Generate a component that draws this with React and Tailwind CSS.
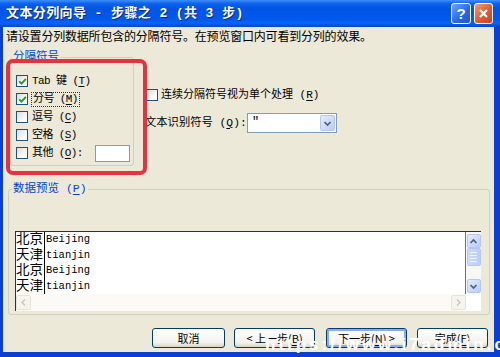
const CHK = (
  <svg width="9" height="9" viewBox="0 0 9 9">
    <path d="M1.2 4.3 L3.5 6.7 L7.9 1.9" stroke="#21A121" strokeWidth="1.9" fill="none" />
  </svg>
);

function Check({ checked }) {
  return (
    <span className="w-[12px] h-[12px] shrink-0 border border-[#1C5180] bg-[linear-gradient(135deg,#DCDCD5,#FFFFFF_80%)] flex items-center justify-center">
      {checked ? CHK : null}
    </span>
  );
}

function U({ children }) {
  return <span className="underline underline-offset-[2px]">{children}</span>;
}

function Arrow({ dir }) {
  const d = dir === "up" ? "M1.5 5 L4.5 2 L7.5 5" : "M1.5 2 L4.5 5 L7.5 2";
  return (
    <div className="w-[14px] h-[14px] rounded-[2px] border border-[#B4C7F3] bg-[linear-gradient(135deg,#E4ECFE,#B9CCF7)] flex items-center justify-center">
      <svg width="9" height="7" viewBox="0 0 9 7">
        <path d={d} stroke="#4D6185" strokeWidth="1.7" fill="none" />
      </svg>
    </div>
  );
}

function HArrow({ dir }) {
  const d = dir === "left" ? "M5 1.5 L2 4.5 L5 7.5" : "M2 1.5 L5 4.5 L2 7.5";
  return (
    <div className="w-[15px] h-[15px] rounded-[2px] border border-[#E6E4DA] bg-[#F5F4EF] flex items-center justify-center">
      <svg width="7" height="9" viewBox="0 0 7 9">
        <path d={d} stroke="#C9C6BA" strokeWidth="1.4" fill="none" />
      </svg>
    </div>
  );
}

const rows = [
  ["北京", "Beijing"],
  ["天津", "tianjin"],
  ["北京", "Beijing"],
  ["天津", "tianjin"],
];

const BTN =
  "h-[20px] rounded-[3px] border border-[#003C74] bg-[linear-gradient(180deg,#FFFFFF,#F3F2EC_75%,#D8D3C8)] flex items-center justify-center whitespace-pre";

export default function App() {
  return (
    <div className="relative w-[500px] h-[357px] overflow-hidden flex flex-col bg-[#0B3FD4] font-['Liberation_Mono','Noto_Sans_CJK_SC',monospace] text-black">
      {/* title bar */}
      <div className="h-[27px] shrink-0 flex items-center pl-[6px] pr-[7px] bg-[linear-gradient(180deg,#3D8EF9_0%,#0B60EB_14%,#0055E5_32%,#0058EE_70%,#0A63F3_86%,#0047C9_100%)]">
        <div className="flex-1 text-white font-bold text-[13px] tracking-[0.4px] whitespace-pre leading-[16px] [text-shadow:1px_1px_0_#0A2A80]">
          文本分列向导 - 步骤之 2 (共 3 步)
        </div>
        <div className="flex items-center gap-[3px]">
          <div className="w-[20px] h-[21px] rounded-[3px] border border-white bg-[linear-gradient(135deg,#6FA2FA,#2866E4_60%,#1F55D0)] flex items-center justify-center text-white font-bold text-[15px] leading-none font-['Liberation_Sans',sans-serif]">
            ?
          </div>
          <div className="w-[19px] h-[21px] rounded-[3px] border border-white bg-[linear-gradient(135deg,#F39A7C,#E05A34_55%,#C8401E)] flex items-center justify-center">
            <svg width="11" height="11" viewBox="0 0 11 11">
              <path d="M2 2 L9 9 M9 2 L2 9" stroke="white" strokeWidth="2.2" />
            </svg>
          </div>
        </div>
      </div>

      {/* body */}
      <div className="flex-1 pl-[3px] pr-[6px] pb-[5px]">
        <div className="relative h-full bg-[#ECE9D8] flex flex-col">
          <div className="pt-[4px] pl-[3px] text-[12px] leading-[14px] tracking-[-0.2px] whitespace-nowrap">
            请设置分列数据所包含的分隔符号。在预览窗口内可看到分列的效果。
          </div>

          <div className="flex mt-[12px]">
            {/* delimiters group */}
            <div className="relative ml-[7px] w-[124px] h-[109px] border border-[#D0D0BF] rounded-[3px] pt-[14px] pl-[5px] text-[11px]">
              <span className="absolute left-[1px] -top-[8px] px-[1px] bg-[#ECE9D8] text-[#0046D5] text-[11.5px] leading-[14px]">
                分隔符号
              </span>
              <div className="h-[18px] flex items-center gap-[4px]">
                <Check checked />
                <span className="tracking-[-0.6px]">Tab 键 (<U>T</U>)</span>
              </div>
              <div className="h-[18px] flex items-center gap-[3px]">
                <Check checked />
                <span className="border border-dotted border-[#333] px-[1px] leading-[13px] tracking-[-0.6px]">
                  分号 (<U>M</U>)
                </span>
              </div>
              <div className="h-[18px] flex items-center gap-[4px]">
                <Check />
                <span className="tracking-[-0.6px]">逗号 (<U>C</U>)</span>
              </div>
              <div className="h-[18px] flex items-center gap-[4px]">
                <Check />
                <span className="tracking-[-0.6px]">空格 (<U>S</U>)</span>
              </div>
              <div className="h-[18px] flex items-center gap-[4px]">
                <Check />
                <span className="w-[59px] whitespace-nowrap tracking-[-0.6px]">其他 (<U>O</U>):</span>
                <span className="w-[35px] h-[17px] border border-[#7F9DB9] bg-white"></span>
              </div>
            </div>

            {/* right options */}
            <div className="ml-[11px] flex flex-col text-[11px]">
              <div className="mt-[29px] ml-[1px] h-[18px] flex items-center gap-[3px] whitespace-nowrap">
                <Check />
                <span>连续分隔符号视为单个处理 (<U>R</U>)</span>
              </div>
              <div className="mt-[9px] h-[20px] flex items-center">
                <span className="w-[102px] whitespace-nowrap text-[11.3px]">
                  文本识别符号 (<U>Q</U>):
                </span>
                <div className="w-[90px] h-[20px] border border-[#7F9DB9] bg-white flex items-stretch">
                  <span className="flex-1 pl-[4px] leading-[16px] text-[12px]">"</span>
                  <div className="w-[15px] my-[1px] mr-[1px] rounded-[2px] border border-[#B4C7F3] bg-[linear-gradient(135deg,#E4ECFE,#B9CCF7)] flex items-center justify-center">
                    <svg width="9" height="7" viewBox="0 0 9 7">
                      <path d="M1.5 2 L4.5 5 L7.5 2" stroke="#4D6185" strokeWidth="1.7" fill="none" />
                    </svg>
                  </div>
                </div>
              </div>
            </div>
          </div>

          {/* preview group */}
          <div className="relative mt-[23px] ml-[5px] w-[482px] h-[126px] border border-[#D0D0BF] rounded-[3px] pt-[41px] pl-[6px]">
            <span className="absolute left-[3px] -top-[8px] px-[1px] bg-[#ECE9D8] text-[#0046D5] text-[11.5px] leading-[14px]">
              数据预览 (<U>P</U>)
            </span>
            <div className="w-[466px] h-[80px] border-t border-l border-[#303030] flex">
              <div className="w-[450px] flex flex-col">
                <div className="h-[62px] bg-white border-r border-[#707070] flex flex-col">
                  {rows.map(([a, b], i) => (
                    <div key={i} className="h-[15.5px] flex items-stretch">
                      <div className="w-[29px] border-r border-black text-[13.5px] leading-[15.5px] whitespace-nowrap overflow-hidden">
                        {a}
                      </div>
                      <div className="pl-[1px] text-[10.5px] leading-[15.5px] font-['Liberation_Mono',monospace]">
                        {b}
                      </div>
                    </div>
                  ))}
                </div>
                <div className="h-[17px] bg-[#FBFAF7] flex justify-between items-start pt-[1px]">
                  <HArrow dir="left" />
                  <HArrow dir="right" />
                </div>
              </div>
              <div className="w-[15px] flex flex-col bg-white">
                <div className="h-[62px] flex flex-col items-center pt-[2px] bg-[#F7F7F4]">
                  <Arrow dir="up" />
                  <div className="w-[14px] h-[18px] rounded-[2px] border border-[#B4C7F3] bg-[linear-gradient(90deg,#CBD9FB,#BCCDF7)] flex flex-col items-center justify-center gap-[2px]">
                    <span className="w-[7px] h-[1px] bg-[#EEF3FE]"></span>
                    <span className="w-[7px] h-[1px] bg-[#EEF3FE]"></span>
                    <span className="w-[7px] h-[1px] bg-[#EEF3FE]"></span>
                    <span className="w-[7px] h-[1px] bg-[#EEF3FE]"></span>
                  </div>
                  <div className="flex-1"></div>
                  <Arrow dir="down" />
                  <div className="h-[1px]"></div>
                </div>
              </div>
            </div>
          </div>

          {/* buttons */}
          <div className="mt-[13px] flex justify-end pr-[6px] text-[11px] font-['Noto_Sans_CJK_SC',sans-serif]">
            <div className={`${BTN} w-[73px]`}>取消</div>
            <div className={`${BTN} ml-[9px] w-[81px]`}>
              {"< 上一步("}<U>B</U>{")"}
            </div>
            <div className={`${BTN} ml-[11px] w-[81px] shadow-[inset_0_0_0_2px_#8AACEC]`}>
              {"下一步("}<U>N</U>{") >"}
            </div>
            <div className={`${BTN} ml-[10px] w-[71px]`}>
              {"完成("}<U>F</U>{")"}
            </div>
          </div>

          {/* red annotation */}
          <div className="absolute left-[3px] top-[32px] w-[141px] h-[116px] border-[4px] border-[#E5323E] rounded-[7px]"></div>
        </div>
      </div>

      {/* watermark */}
      <div className="absolute left-[265px] top-[336px] text-white font-bold text-[17px] tracking-[3px] leading-[17px] whitespace-nowrap font-['Liberation_Sans',sans-serif]">
        https://www.i7admin.com
      </div>
    </div>
  );
}
